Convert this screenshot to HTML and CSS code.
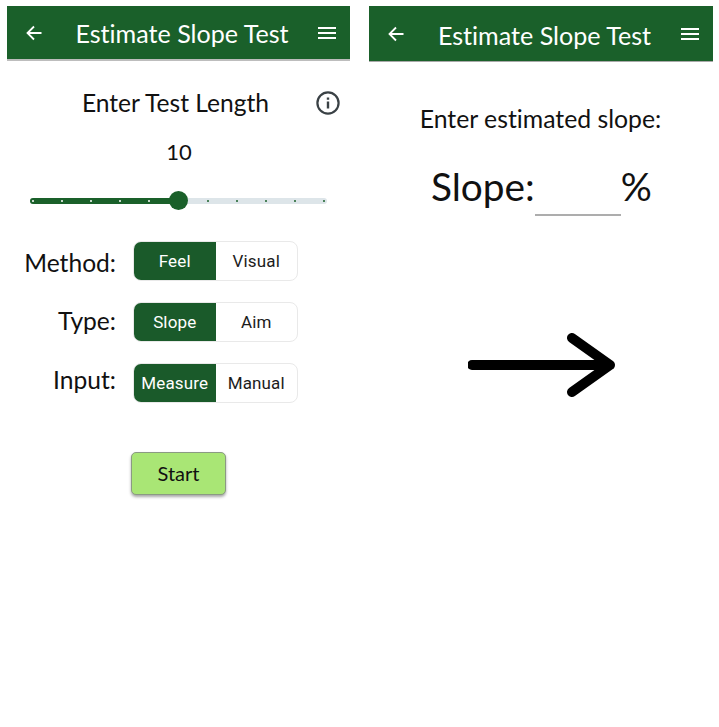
FILE: index.html
```html
<!DOCTYPE html>
<html lang="en">
<head>
<meta charset="utf-8">
<title>Estimate Slope Test</title>
<link rel="stylesheet" href="styles.css">
</head>
<body>
<main class="screens">
  <section class="screen screen-left">
    <header class="appbar appbar-left">
      <svg class="icon-back" viewBox="0 0 18 18"><path d="M16.5 9H2.5M9 2.5L2.5 9L9 15.5" fill="none" stroke="#fff" stroke-width="1.8"/></svg>
      <h1 class="appbar-title">Estimate Slope Test</h1>
      <svg class="icon-menu" viewBox="0 0 18 14"><path d="M0 2H18M0 7H18M0 12H18" fill="none" stroke="#fff" stroke-width="1.8"/></svg>
    </header>
    <div class="length-row">
      <h2 class="length-title">Enter Test Length</h2>
      <svg class="icon-info" viewBox="0 0 24 24"><circle cx="12" cy="12" r="10.6" fill="none" stroke="#3a4145" stroke-width="2.2"/><path d="M12 10.5V17.5M12 6.5V8.7" fill="none" stroke="#3a4145" stroke-width="2.4"/></svg>
    </div>
    <div class="length-value">10</div>
    <div class="slider">
      <div class="track">
        <div class="track-fill"></div>
        <div class="dots">
          <i class="dot dot-on"></i><i class="dot dot-on"></i><i class="dot dot-on"></i><i class="dot dot-on"></i><i class="dot dot-on"></i><i class="dot dot-hidden"></i><i class="dot"></i><i class="dot"></i><i class="dot"></i><i class="dot"></i><i class="dot"></i>
        </div>
        <div class="thumb"></div>
      </div>
    </div>
    <div class="options">
      <div class="option">
        <span class="option-label option-label-method">Method:</span>
        <div class="segmented"><span class="segment segment-on">Feel</span><span class="segment">Visual</span></div>
      </div>
      <div class="option">
        <span class="option-label option-label-type">Type:</span>
        <div class="segmented"><span class="segment segment-on">Slope</span><span class="segment">Aim</span></div>
      </div>
      <div class="option">
        <span class="option-label option-label-input">Input:</span>
        <div class="segmented"><span class="segment segment-on">Measure</span><span class="segment">Manual</span></div>
      </div>
    </div>
    <button class="start" type="button">Start</button>
  </section>
  <section class="screen screen-right">
    <header class="appbar appbar-right">
      <svg class="icon-back" viewBox="0 0 18 18"><path d="M16.5 9H2.5M9 2.5L2.5 9L9 15.5" fill="none" stroke="#fff" stroke-width="1.8"/></svg>
      <h1 class="appbar-title">Estimate Slope Test</h1>
      <svg class="icon-menu" viewBox="0 0 18 14"><path d="M0 2H18M0 7H18M0 12H18" fill="none" stroke="#fff" stroke-width="1.8"/></svg>
    </header>
    <p class="prompt">Enter estimated slope:</p>
    <div class="slope-row">
      <span class="slope-label">Slope:</span>
      <span class="slope-input"></span>
      <span class="slope-unit">%</span>
    </div>
    <svg class="arrow" viewBox="0 0 150 68"><path d="M4 34H142M104 7L142 34L104 61" fill="none" stroke="#000" stroke-width="10" stroke-linecap="round" stroke-linejoin="round"/></svg>
  </section>
</main>
</body>
</html>
```
FILE: styles.css
```css
* { box-sizing: border-box; }
html, body { margin: 0; padding: 0; background: #fff; }
body { width: 719px; height: 727px; overflow: hidden; font-family: Lato, sans-serif; color: #111; font-variant-ligatures: none; }
.screens { display: flex; align-items: flex-start; padding: 6px 0 0 7px; gap: 19px; }
.screen { display: flex; flex-direction: column; }
.screen-left { width: 343px; }
.screen-right { width: 344px; }

.appbar { display: flex; align-items: center; background: #1a602a; color: #fff; }
.appbar-left { height: 55px; padding: 0 14px 0 18px; border-bottom: 2px solid #bdbdbd; background-clip: padding-box; }
.appbar-right { height: 56px; padding: 0 14px 0 18px; border-bottom: 1px solid #a9a9a9; background-clip: padding-box; }
.appbar-title { flex: 1; margin: 0; padding: 2px 0 0 3px; font-size: 25.1px; font-weight: 400; text-align: center; white-space: nowrap; line-height: 1; }
.appbar-right .appbar-title { padding-top: 4px; }
.icon-back { width: 18px; height: 18px; flex: none; }
.icon-menu { width: 18px; height: 14px; flex: none; }

.length-row { position: relative; display: flex; justify-content: center; padding: 27px 6px 0 0; }
.length-title { margin: 0; width: 100%; text-align: center; font-size: 24.6px; font-weight: 400; line-height: 29px; }
.icon-info { position: absolute; right: 10px; top: 30px; width: 24px; height: 24px; }
.length-value { margin-top: 22px; text-align: center; width: 344px; font-size: 22px; line-height: 26px; }

.slider { margin: 33px 0 0 23px; width: 297px; }
.track { position: relative; height: 6px; border-radius: 3px; background: #dde5e9; }
.track-fill { position: absolute; left: 0; top: 0; bottom: 0; width: 150px; border-radius: 3px; background: #1a602a; }
.dots { position: absolute; left: 2px; right: 2px; top: 2px; display: flex; justify-content: space-between; }
.dot { width: 2px; height: 2px; border-radius: 50%; background: #1a602a; }
.dot-on { background: #fff; }
.dot-hidden { visibility: hidden; }
.thumb { position: absolute; left: 139px; top: -7px; width: 19px; height: 19px; border-radius: 50%; background: #1a602a; }

.options { display: flex; flex-direction: column; gap: 21px; margin-top: 37px; padding-left: 17px; }
.option { display: flex; align-items: center; gap: 17px; height: 40px; }
.option-label { width: 92px; text-align: right; font-size: 24.6px; line-height: 40px; }
.option-label-method { padding-top: 4px; }
.option-label-type { padding-bottom: 2px; }
.option-label-input { padding-bottom: 7px; }
.segmented { display: flex; width: 165px; height: 40px; border: 1px solid #e9e9e9; border-radius: 8px; overflow: hidden; background: #fff; }
.segment { flex: 1; display: flex; align-items: center; justify-content: center; font-family: Roboto, sans-serif; font-size: 17px; letter-spacing: 0.15px; color: #1c1c1c; padding-bottom: 1px; }
.segment-on { background: #1a5a2a; color: #fff; }

.start { align-self: flex-start; margin: 49px 0 0 124px; width: 95px; height: 43px; border: 1px solid #8b9a83; border-radius: 5px; background: #a9e675; box-shadow: 0 2px 3px rgba(0,0,0,.35); font-family: Lato, sans-serif; font-size: 20px; color: #111; padding: 0 0 2px; font-variant-ligatures: none; }

.prompt { margin: 42px 0 0; padding-right: 1px; text-align: center; font-size: 24.8px; line-height: 29px; }
.slope-row { display: flex; align-items: flex-start; margin: 31px 0 0 62px; }
.slope-label, .slope-unit { font-size: 38.8px; line-height: 45px; }
.slope-input { width: 86px; height: 52px; border-bottom: 2px solid #adadad; }
.arrow { align-self: flex-start; width: 150px; height: 68px; margin: 115px 0 0 99px; }
```
